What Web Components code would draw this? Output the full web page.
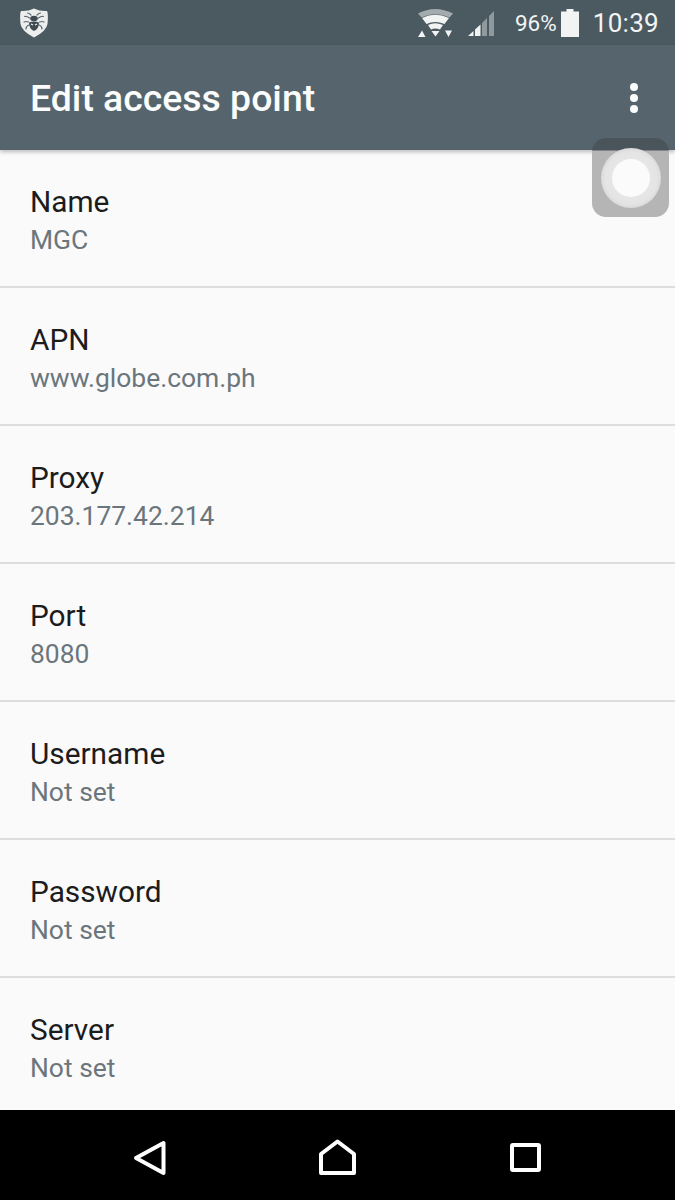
<!DOCTYPE html>
<html>
<head>
<meta charset="utf-8">
<title>Edit access point</title>
<style>
  html, body { margin: 0; padding: 0; background: #fafafa; }
  body { font-family: Roboto, "Liberation Sans", sans-serif; }
</style>
</head>
<body>
<apn-screen>
  <apn-status-bar slot="top"></apn-status-bar>
  <apn-toolbar slot="top">Edit access point</apn-toolbar>
  <apn-row label="Name">MGC</apn-row>
  <apn-row label="APN">www.globe.com.ph</apn-row>
  <apn-row label="Proxy">203.177.42.214</apn-row>
  <apn-row label="Port">8080</apn-row>
  <apn-row label="Username">Not set</apn-row>
  <apn-row label="Password">Not set</apn-row>
  <apn-row label="Server" last>Not set</apn-row>
  <apn-nav-bar slot="bottom"></apn-nav-bar>
  <apn-float-button slot="overlay"></apn-float-button>
</apn-screen>

<script>
class ApnScreen extends HTMLElement {
  constructor() {
    super();
    this.attachShadow({ mode: "open" }).innerHTML = /*html*/`
<style>
  :host {
    display: flex;
    flex-direction: column;
    position: relative;
    width: 675px;
    height: 1200px;
    overflow: hidden;
    background: #fafafa;
  }
  #list { flex: 1; min-height: 0; overflow: hidden; }
</style>
<slot name="top"></slot>
<div id="list"><slot></slot></div>
<slot name="bottom"></slot>
<slot name="overlay"></slot>
`;
  }
}
customElements.define('apn-screen', ApnScreen);

class ApnStatusBar extends HTMLElement {
  constructor() {
    super();
    this.attachShadow({ mode: "open" }).innerHTML = /*html*/`
<style>
  :host {
    display: flex;
    align-items: center;
    height: 45px;
    background: #4b5a61;
    color: #f2f4f4;
    padding: 0 16px 0 20px;
    font-size: 24px;
  }
  svg { display: block; flex: none; }
  #spacer { flex: 1; }
  #wifi { margin-right: 13px; }
  #signal { margin-right: 20px; }
  #percent { font-size: 22.5px; margin-right: 4px; }
  #battery { margin-right: 14px; }
  #clock { font-size: 26px; letter-spacing: .3px; }
</style>
<svg width="28" height="30" viewBox="0 0 28 30">
  <path d="M14 .5 Q20 3.500 27 3 Q28.500 5 27.500 16 Q26.500 23 14 29.500 Q1.500 23 .5 16 Q-.5 5 1 3 Q8 3.500 14 .5Z" fill="#eceeee"/>
  <g fill="none" stroke="#5f6c72" stroke-width="1.2" stroke-linecap="round">
    <path d="M11 7 Q9 5 7.500 5 M17 7 Q19 5 20.500 5 M9.500 10 Q7 8 4.500 8.500 M18.500 10 Q21 8 23.500 8.500 M8.500 14 Q6 13 4 14 M19.500 14 Q22 13 24 14 M9 17 Q6 18 6 21 M19 17 Q22 18 22 21"/>
  </g>
  <ellipse cx="14" cy="10.500" rx="3.800" ry="2.800" fill="#3f4a50"/>
  <path d="M9 14.500 Q14 12.500 19 14.500 Q19 21 14 23 Q9 21 9 14.500Z" fill="#3f4a50"/>
  <path d="M11 16 L13 17 M17 16 L15 17" stroke="#eceeee" stroke-width="1.3"/>
</svg>
<div id="spacer"></div>
<svg id="wifi" width="37" height="30" viewBox="0 0 37 30">
  <path d="M1 5.500 Q18 -3.500 36 5.500 L32.500 9.500 Q18 3 4.500 9.500Z" fill="#a3abaf"/>
  <path d="M5 10 Q18 3.500 32 10 L27.500 16 Q18 12 9.500 16Z" fill="#f2f4f4"/>
  <path d="M11 17 Q18 13.500 26 17 L23 21.500 Q18 19.500 14 21.500Z" fill="#f2f4f4"/>
  <path d="M14.500 23 H22.500 L18.500 28.500Z" fill="#f2f4f4"/>
  <path d="M1 29 L5 22.500 L8.500 29Z M28 22.500 H35 L31.500 29Z" fill="#f2f4f4"/>
</svg>
<svg id="signal" width="28" height="30" viewBox="0 0 28 30">
  <path d="M15 15 L20 10 V28 H15Z M22 8 L27 3 V28 H22Z" fill="#8f9a9f"/>
  <path d="M1 28 L6.500 23 V28Z M8 21.500 L13.500 16.500 V28 H8Z" fill="#f2f4f4"/>
</svg>
<span id="percent">96%</span>
<svg id="battery" width="18" height="28" viewBox="0 0 18 28">
  <path d="M5.500 0 H12.500 V2.500 H18 V28 H0 V2.500 H5.500Z" fill="#f2f4f4"/>
</svg>
<span id="clock">10:39</span>
`;
  }
}
customElements.define('apn-status-bar', ApnStatusBar);

class ApnToolbar extends HTMLElement {
  constructor() {
    super();
    this.attachShadow({ mode: "open" }).innerHTML = /*html*/`
<style>
  :host {
    display: flex;
    align-items: center;
    justify-content: space-between;
    height: 105px;
    padding: 1px 37px 0 30px;
    box-sizing: border-box;
    background: #56656d;
    color: #fbfcfc;
    font-size: 37.400px;
    font-weight: 500;
    position: relative;
    box-shadow: 0 2px 4px rgba(0,0,0,.25);
  }
  #more { display: flex; flex-direction: column; gap: 3px; margin-top: -1px; }
  #more i { width: 8px; height: 8px; border-radius: 50%; background: #fbfcfc; }
</style>
<span><slot></slot></span>
<div id="more"><i></i><i></i><i></i></div>
`;
  }
}
customElements.define('apn-toolbar', ApnToolbar);

class ApnRow extends HTMLElement {
  constructor() {
    super();
    this.attachShadow({ mode: "open" }).innerHTML = /*html*/`
<style>
  :host {
    display: flex;
    flex-direction: column;
    box-sizing: border-box;
    height: 138px;
    padding: 34px 30px 0;
    border-bottom: 2px solid #dcdddd;
  }
  :host([last]) { border-bottom: 0; }
  #label { font-size: 29.800px; line-height: 36px; color: #1c1c1c; }
  #value { font-size: 26.450px; line-height: 36px; margin-top: 2px; color: #6b767c; }
</style>
<div id="label"></div>
<div id="value"><slot></slot></div>
`;
    this.shadowRoot.querySelector('#label').textContent = this.getAttribute('label');
  }
}
customElements.define('apn-row', ApnRow);

class ApnNavBar extends HTMLElement {
  constructor() {
    super();
    this.attachShadow({ mode: "open" }).innerHTML = /*html*/`
<style>
  :host { display: block; height: 90px; background: #000; }
  svg { display: block; }
</style>
<svg width="675" height="90" viewBox="0 0 675 90" fill="none" stroke="#fff" stroke-width="4" stroke-linejoin="round">
  <path d="M136 48 L163.500 33 V63Z"/>
  <path d="M321 63 V44 L337.500 31.500 L354 44 V63Z"/>
  <rect x="512" y="35" width="27" height="25" rx="1"/>
</svg>
`;
  }
}
customElements.define('apn-nav-bar', ApnNavBar);

// assistive touch style button, lies over the list
class ApnFloatButton extends HTMLElement {
  constructor() {
    super();
    this.attachShadow({ mode: "open" }).innerHTML = /*html*/`
<style>
  :host {
    position: absolute;
    left: 592px;
    top: 138px;
    width: 77px;
    height: 79px;
    border-radius: 14px;
    background: linear-gradient(#4a555b 0, #4a555b 12px, #b5b5b5 13px);
    display: flex;
    align-items: center;
    justify-content: center;
  }
  #ring {
    width: 60px;
    height: 60px;
    border-radius: 50%;
    background: radial-gradient(circle, #ececec 0, #e4e4e4 62%, #cfcfcf 80%, #bcbcbc 100%);
    display: flex;
    align-items: center;
    justify-content: center;
  }
  #dot { width: 38px; height: 38px; border-radius: 50%; background: #fbfbfb; }
</style>
<div id="ring"><div id="dot"></div></div>
`;
  }
}
customElements.define('apn-float-button', ApnFloatButton);
</script>
</body>
</html>
